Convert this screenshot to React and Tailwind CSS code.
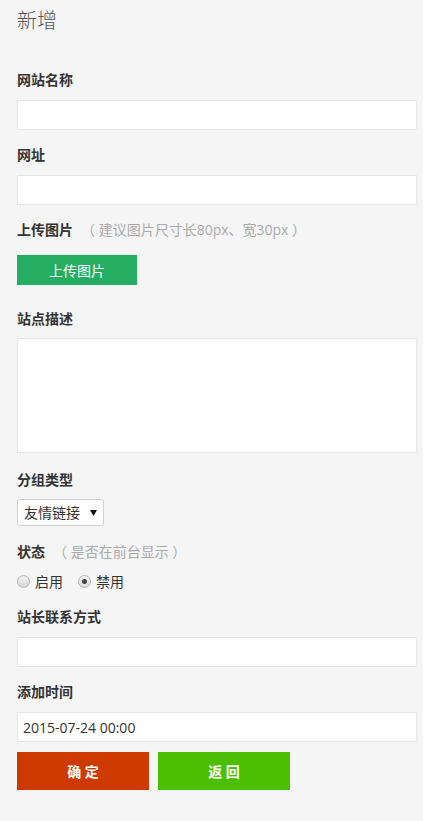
export default function App() {
  const font = { fontFamily: '"Open Sans", "Noto Sans CJK SC", sans-serif' };
  return (
    <div className="min-h-[821px] w-full bg-[#f5f5f5] text-[#333]" style={font}>
      <div className="px-[17px] pt-[6px] pb-[31px] w-[423px]">
        <div className="text-[20px] leading-[30px] text-[#555] font-light">新增</div>

        <div className="mt-[34px] text-[14px] leading-5 font-bold text-[#333]">网站名称</div>
        <div className="mt-[10px] h-[30px] w-[400px] bg-white border border-[#e6e6e6]"></div>

        <div className="mt-[15px] text-[14px] leading-5 font-bold">网址</div>
        <div className="mt-[10px] h-[30px] w-[400px] bg-white border border-[#e6e6e6]"></div>

        <div className="mt-[15px] text-[14px] leading-5 flex items-center">
          <span className="font-bold">上传图片</span>
          <span className="ml-[8px] text-[#aaa]">（ 建议图片尺寸长80px、宽30px ）</span>
        </div>
        <div className="mt-[15px] h-[30px] w-[120px] bg-[#25ae62] text-white text-[14px] flex items-center justify-center">上传图片</div>

        <div className="mt-[24px] text-[14px] leading-5 font-bold">站点描述</div>
        <div className="mt-[9px] h-[115px] w-[400px] bg-white border border-[#e6e6e6]"></div>

        <div className="mt-[17px] text-[14px] leading-5 font-bold">分组类型</div>
        <div className="mt-[9px] h-[27px] w-[87px] bg-white border border-[#cfcfcf] rounded-[3px] flex items-center pl-[6px] text-[14px] text-[#333]">
          <span>友情链接</span>
          <svg className="ml-[10px]" width="7" height="6" viewBox="0 0 7 6">
            <polygon points="0,0 7,0 3.5,6" fill="#111" />
          </svg>
        </div>

        <div className="mt-[16px] text-[14px] leading-5 flex items-center">
          <span className="font-bold">状态</span>
          <span className="ml-[8px] text-[#aaa]">（ 是否在前台显示 ）</span>
        </div>
        <div className="mt-[9px] h-5 flex items-center text-[14px]">
          <span className="w-[13px] h-[13px] rounded-full border border-[#b5b5b5] bg-gradient-to-b from-[#f0f0f0] to-[#d8d8d8]"></span>
          <span className="ml-[5px]">启用</span>
          <span className="ml-[15px] w-[13px] h-[13px] rounded-full border border-[#b5b5b5] bg-gradient-to-b from-[#f4f4f4] to-[#dcdcdc] flex items-center justify-center">
            <span className="w-[5px] h-[5px] rounded-full bg-[#444]"></span>
          </span>
          <span className="ml-[5px]">禁用</span>
        </div>

        <div className="mt-[16px] text-[14px] leading-5 font-bold">站长联系方式</div>
        <div className="mt-[10px] h-[30px] w-[400px] bg-white border border-[#e6e6e6]"></div>

        <div className="mt-[15px] text-[14px] leading-5 font-bold">添加时间</div>
        <div className="mt-[10px] h-[30px] w-[400px] bg-white border border-[#e6e6e6] flex items-center pl-[5px] text-[14px] text-[#333]">2015-07-24 00:00</div>

        <div className="mt-[10px] flex gap-[9px]">
          <div className="h-[38px] w-[132px] bg-[#cc3a00] text-white text-[14px] font-bold flex items-center justify-center">确 定</div>
          <div className="h-[38px] w-[132px] bg-[#4cbe00] text-white text-[14px] font-bold flex items-center justify-center">返 回</div>
        </div>
      </div>
    </div>
  );
}
